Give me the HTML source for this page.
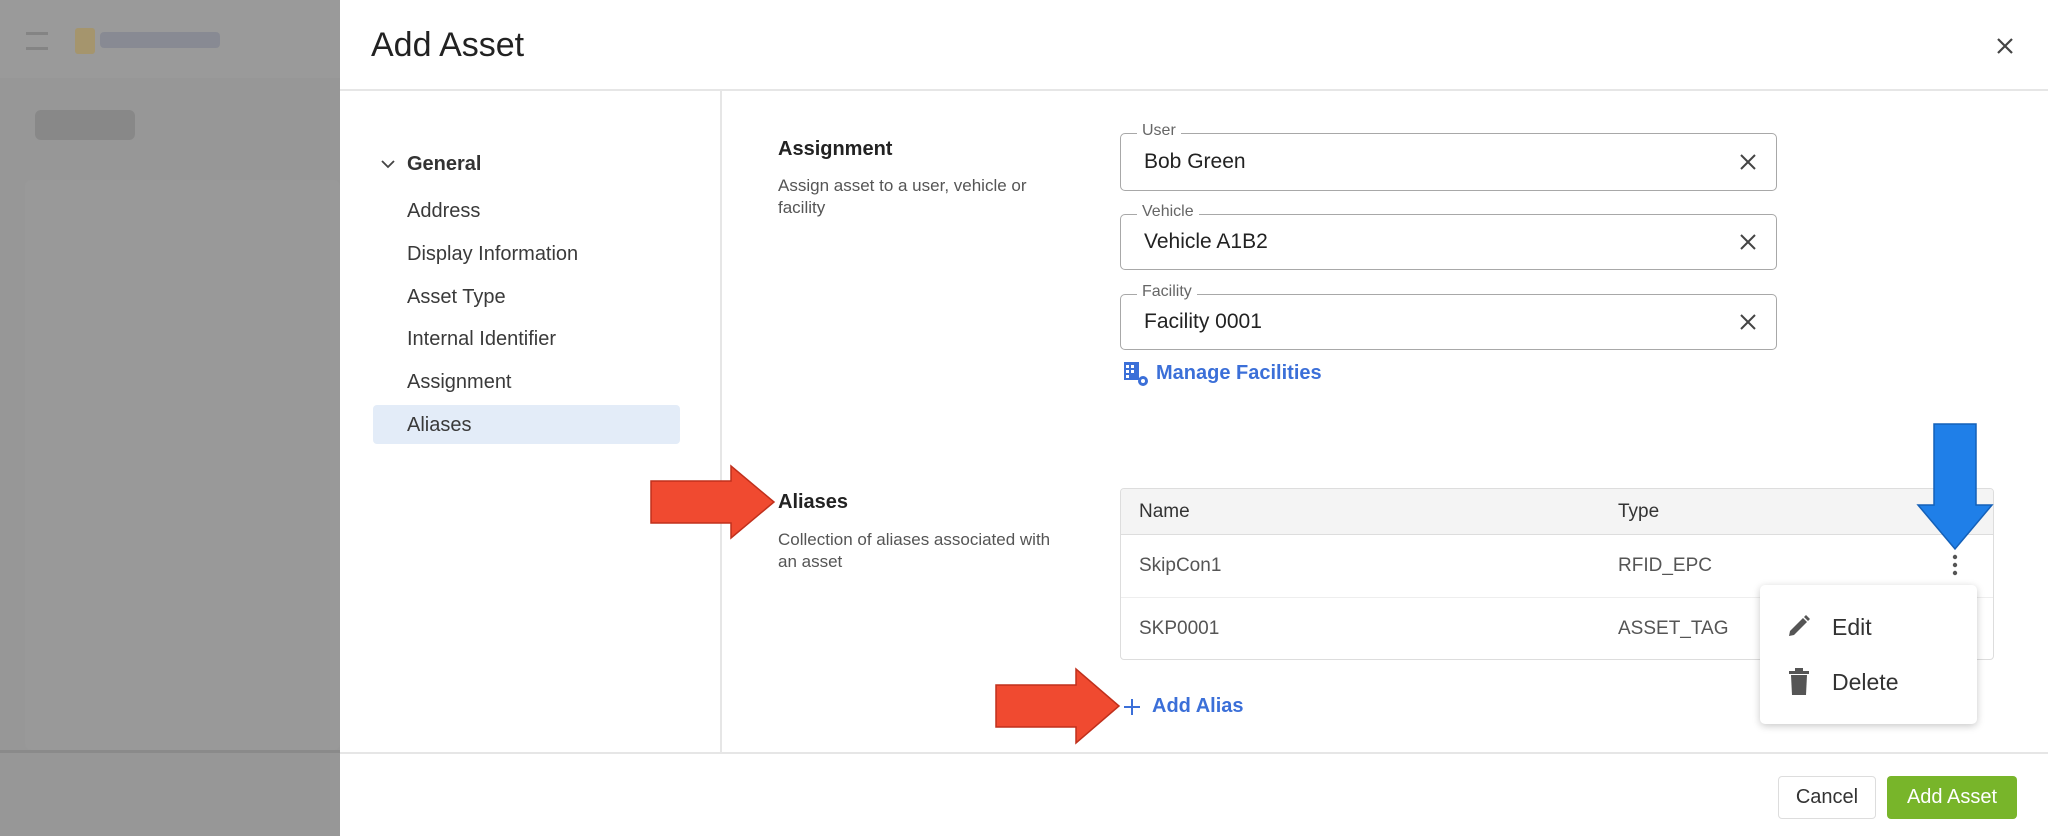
<!DOCTYPE html>
<html><head><meta charset="utf-8"><style>
*{margin:0;padding:0;box-sizing:border-box}
body{width:2048px;height:836px;overflow:hidden;font-family:"Liberation Sans",sans-serif;background:#fff;position:relative;color:#222}
.abs{position:absolute}
.ov{left:0;top:0;width:340px;height:836px;background:#979797}
.nav{left:407px;font-size:20px;color:#3a3a3a;line-height:24px}
.inp{left:1120px;width:657px;border:1.5px solid #a8a8a8;border-radius:5px;background:#fff}
.lbl{position:absolute;left:16px;top:-12px;background:#fff;padding:0 5px;font-size:16px;color:#666}
.val{position:absolute;left:23px;font-size:21px;color:#222}
.x{position:absolute;right:18px;top:50%;margin-top:-10px}
</style></head><body>
<div class="abs ov">
 <div class="abs" style="left:0;top:0;width:340px;height:78px;background:#9a9a9a"></div>
 <div class="abs" style="left:26px;top:32px;width:22px;height:18px;border-top:3px solid #777;border-bottom:3px solid #777;opacity:.6"></div>
 <div class="abs" style="left:75px;top:28px;width:20px;height:26px;background:#b09040;opacity:.5;border-radius:3px"></div>
 <div class="abs" style="left:100px;top:32px;width:120px;height:16px;background:#7d8090;opacity:.6;border-radius:4px"></div>
 <div class="abs" style="left:35px;top:110px;width:100px;height:30px;background:#7a7a7a;opacity:.5;border-radius:6px"></div>
 <div class="abs" style="left:25px;top:180px;width:315px;height:570px;background:#999;border-radius:6px"></div>
 <div class="abs" style="left:0;top:750px;width:340px;height:3px;background:#8a8a8a"></div>
</div>
<div class="abs" style="left:371px;top:26px;font-size:34px;color:#222">Add Asset</div>
<svg class="abs" style="left:1995px;top:36px" width="20" height="20"><path d="M3 3L17 17M17 3L3 17" stroke="#444" stroke-width="2.2"/></svg>
<div class="abs" style="left:340px;top:89px;width:1708px;height:2px;background:#e6e6e6"></div>
<div class="abs" style="left:340px;top:752px;width:1708px;height:2px;background:#e6e6e6"></div>
<div class="abs" style="left:720px;top:91px;width:1.5px;height:661px;background:#e6e6e6"></div>

<svg class="abs" style="left:380px;top:158px" width="16" height="12"><path d="M2 3L8 9L14 3" stroke="#444" stroke-width="1.8" fill="none"/></svg>
<div class="abs nav" style="top:152px;font-weight:bold;color:#333">General</div>
<div class="abs nav" style="top:199px">Address</div>
<div class="abs nav" style="top:242px">Display Information</div>
<div class="abs nav" style="top:285px">Asset Type</div>
<div class="abs nav" style="top:327px">Internal Identifier</div>
<div class="abs nav" style="top:370px">Assignment</div>
<div class="abs" style="left:373px;top:405px;width:307px;height:39px;background:#e3ecf8;border-radius:4px"></div>
<div class="abs nav" style="top:413px">Aliases</div>

<div class="abs" style="left:778px;top:138px;font-size:20px;font-weight:bold">Assignment</div>
<div class="abs" style="left:778px;top:175px;font-size:17px;color:#555;line-height:22px;width:300px">Assign asset to a user, vehicle or<br>facility</div>

<div class="abs inp" style="top:133px;height:58px"><span class="lbl">User</span><span class="val" style="top:16px">Bob Green</span><svg class="x" width="20" height="20"><path d="M3 3L17 17M17 3L3 17" stroke="#444" stroke-width="2"/></svg></div>
<div class="abs inp" style="top:214px;height:56px"><span class="lbl">Vehicle</span><span class="val" style="top:15px">Vehicle A1B2</span><svg class="x" width="20" height="20"><path d="M3 3L17 17M17 3L3 17" stroke="#444" stroke-width="2"/></svg></div>
<div class="abs inp" style="top:294px;height:56px"><span class="lbl">Facility</span><span class="val" style="top:15px">Facility 0001</span><svg class="x" width="20" height="20"><path d="M3 3L17 17M17 3L3 17" stroke="#444" stroke-width="2"/></svg></div>

<svg class="abs" style="left:1123px;top:361px" width="26" height="26"><g fill="#3b6fd8"><rect x="1" y="1" width="15" height="18"/><circle cx="20" cy="20" r="5"/></g><g fill="#fff"><rect x="3" y="4" width="3" height="3"/><rect x="8" y="4" width="3" height="3"/><rect x="3" y="9" width="3" height="3"/><rect x="8" y="9" width="3" height="3"/><rect x="3" y="14" width="3" height="3"/><circle cx="20" cy="20" r="2"/></g></svg>
<div class="abs" style="left:1156px;top:362px;font-size:20px;color:#3b6fd8;font-weight:bold">Manage Facilities</div>

<div class="abs" style="left:778px;top:491px;font-size:20px;font-weight:bold">Aliases</div>
<div class="abs" style="left:778px;top:529px;font-size:17px;color:#555;line-height:22px">Collection of aliases associated with<br>an asset</div>

<div class="abs" style="left:1120px;top:488px;width:874px;height:172px;border:1.5px solid #ddd;border-radius:4px;overflow:hidden">
 <div style="height:46px;background:#f4f4f4;border-bottom:1.5px solid #ddd"></div>
 <div style="height:63px;border-bottom:1px solid #eee"></div>
</div>
<div class="abs" style="left:1139px;top:501px;font-size:19px;color:#333">Name</div>
<div class="abs" style="left:1618px;top:501px;font-size:19px;color:#333">Type</div>
<div class="abs" style="left:1139px;top:555px;font-size:19px;color:#555">SkipCon1</div>
<div class="abs" style="left:1618px;top:555px;font-size:19px;color:#555">RFID_EPC</div>
<div class="abs" style="left:1139px;top:618px;font-size:19px;color:#555">SKP0001</div>
<div class="abs" style="left:1618px;top:618px;font-size:19px;color:#555">ASSET_TAG</div>
<svg class="abs" style="left:1951px;top:553px" width="8" height="24"><g fill="#555"><circle cx="4" cy="4" r="2.2"/><circle cx="4" cy="12" r="2.2"/><circle cx="4" cy="20" r="2.2"/></g></svg>

<div class="abs" style="left:1760px;top:585px;width:217px;height:139px;background:#fff;border-radius:5px;box-shadow:0 2px 8px rgba(0,0,0,.22)"></div>
<svg class="abs" style="left:1786px;top:613px" width="26" height="26"><path d="M3 23L4 18L17 5L21 9L8 22Z" fill="#555"/><path d="M18 4L20 2L24 6L22 8Z" fill="#555"/></svg>
<div class="abs" style="left:1832px;top:614px;font-size:23px;color:#333">Edit</div>
<svg class="abs" style="left:1788px;top:668px" width="22" height="28"><rect x="1" y="3" width="20" height="3" fill="#555"/><rect x="7" y="0" width="8" height="4" fill="#555"/><path d="M3 7H19L18 27H4Z" fill="#555"/></svg>
<div class="abs" style="left:1832px;top:669px;font-size:23px;color:#333">Delete</div>

<svg class="abs" style="left:1122px;top:697px" width="20" height="20"><path d="M10 2V18M2 10H18" stroke="#3b6fd8" stroke-width="2"/></svg>
<div class="abs" style="left:1152px;top:695px;font-size:20px;color:#3b6fd8;font-weight:bold">Add Alias</div>

<div class="abs" style="left:1778px;top:776px;width:98px;height:43px;border:1.5px solid #ddd;border-radius:4px;font-size:20px;color:#333;text-align:center;line-height:40px">Cancel</div>
<div class="abs" style="left:1887px;top:776px;width:130px;height:43px;background:#78b52a;border-radius:4px;font-size:20px;color:#fff;text-align:center;line-height:43px">Add Asset</div>

<svg class="abs" style="left:648px;top:464px" width="130" height="76"><path d="M3 17H83V2L126 38L83 74V59H3Z" fill="#f04a30" stroke="#c0301c" stroke-width="1.5"/></svg>
<svg class="abs" style="left:993px;top:667px" width="130" height="78"><path d="M3 18H83V2L126 39L83 76V60H3Z" fill="#f04a30" stroke="#c0301c" stroke-width="1.5"/></svg>
<svg class="abs" style="left:1915px;top:422px" width="80" height="130"><path d="M19 2H61V83H77L40 127L3 83H19Z" fill="#1f7fe8" stroke="#1460b8" stroke-width="1.5"/></svg>
</body></html>
